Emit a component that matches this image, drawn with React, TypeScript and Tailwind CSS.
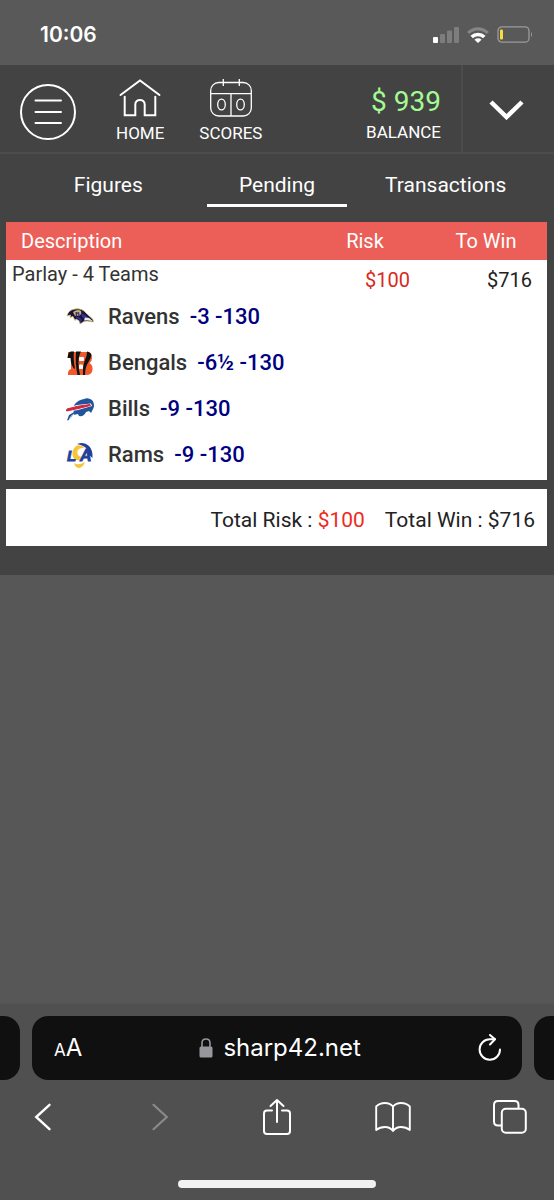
import type { ReactNode } from 'react'

const legs = [
  { team: 'Ravens', odds: '-3 -130', logo: <RavensLogo /> },
  { team: 'Bengals', odds: '-6½ -130', logo: <BengalsLogo /> },
  { team: 'Bills', odds: '-9 -130', logo: <BillsLogo /> },
  { team: 'Rams', odds: '-9 -130', logo: <RamsLogo /> },
]

const tabs = ['Figures', 'Pending', 'Transactions']

function RavensLogo() {
  return (
    <svg width="28" height="28" viewBox="0 0 28 28" aria-hidden="true">
      <path d="M1 13 Q2 7 9 6 Q16 5 20 10 L27 16.5 L27.5 19 L21 18 L18 18.5 L14 21 L13.5 18 L10 16 L9 17.5 L7 13.5 L4 14.5 L4.5 12 Z" fill="#17153f" stroke="#d9c36a" strokeWidth="0.8" />
      <path d="M7 9 Q12 5.500 15 8 Q16 11 13 13 L9 13 Z" fill="#c9b27a" />
      <path d="M8.500 13.500 L13 14 L16 17 L14 19.500 L12.500 16 Z" fill="#3b2c93" />
      <path d="M15 10 L19 12 L24 16 L19 16.500 L16 14 Z" fill="#35308d" />
      <path d="M19 14.500 L23 15 L27 18.300 L21 17.300 L18 17.500 Z" fill="#e9e9ee" />
      <text x="9" y="13" fontSize="7" className="font-['Liberation_Serif',serif] font-bold" fill="#231c55">B</text>
    </svg>
  )
}

function BengalsLogo() {
  return (
    <svg width="28" height="28" viewBox="0 0 28 28" aria-hidden="true">
      <path d="M2 3 H21 Q26 4 26 9 Q26 12.500 23.500 14 Q27 16 26.500 21 Q26 26 20 26 H2 Q1.500 21 5 20 V8 H2 Z" fill="#f0592b" />
      <path d="M1.500 9 Q2 3 5 2.500 L8 2.500 Q7 9 9 20 Q5 18 4.500 9 Z" fill="#111" />
      <path d="M10 2.500 L15 2.500 Q12.500 7 12.500 14 Q12.500 20 14 26 L11.500 26 Q9 15 10 2.500 Z" fill="#111" />
      <path d="M21 2.500 Q25 3 25.500 6 Q25 9 22.500 13 Q19 18 19 26 L17 26 Q16.500 17 19 11 Q21 7 21 2.500 Z" fill="#111" />
      <rect x="13" y="8" width="5" height="4" rx="1" fill="#fff" />
      <rect x="13" y="15.500" width="4" height="4.500" rx="1" fill="#fff" />
    </svg>
  )
}

function BillsLogo() {
  return (
    <svg width="28" height="28" viewBox="0 0 28 28" aria-hidden="true">
      <path d="M6 14 L9 9 Q12 5 18 4 Q22 2 26 5 Q29 8 27.500 13 L25 18 L23 16 L20 17 Q18 22 13 21 L12 19 L7 20 L3 25 L1 25.500 L3 20 L8 17 Z" fill="#22549b" />
      <path d="M0.500 13 L11 10 L25 8.500 L26 11 L12 15 L0 17 Z" fill="#fff" />
      <path d="M1 14 L12 11.200 L24 9.500 L24.500 10.500 L12 13.600 L0.500 16 Z" fill="#d3243c" stroke="#d3243c" strokeWidth="1" />
      <path d="M8 19 Q4 21 3 25.500" fill="none" stroke="#fff" strokeWidth="0.8" />
    </svg>
  )
}

function RamsLogo() {
  return (
    <svg width="28" height="28" viewBox="0 0 28 28" aria-hidden="true">
      <path d="M11 3 Q18 0 23 5 Q27 9 26.500 17 L23 14 Q22 7 17 5 Q14 3.500 11 3 Z" fill="#23409a" />
      <path d="M19 7 Q14 2.500 9.500 5.500 Q5 10 7 16 Q9 20 14 19 Q17 18 18 15 Q14 17 12 14 Q10 9 14 7.500 Q17 6.500 19 7 Z" fill="#f5c63b" />
      <path d="M8 22 Q12 25 19 21 Q17 27 12 27 Q9 26 8 22 Z" fill="#f5c63b" />
      <text x="1" y="20" fontSize="15" className="font-['Liberation_Sans',sans-serif] font-bold italic" fill="#23409a" stroke="#23409a" strokeWidth="0.8">L</text>
      <text x="14" y="20" fontSize="16" className="font-['Liberation_Sans',sans-serif] font-bold italic" fill="#23409a" stroke="#23409a" strokeWidth="0.8">A</text>
    </svg>
  )
}

function StatusBar() {
  return (
    <div className="flex h-[65px] items-center justify-between bg-[#595959] pl-10 pr-5 pt-1">
      <span className="font-['Inter',sans-serif] text-[21px] font-semibold">10:06</span>
      <div className="flex items-center gap-2">
        <svg width="26" height="16" viewBox="0 0 26 16" aria-label="Signal">
          <rect x="0" y="10" width="5" height="6" rx="1" fill="#fff" />
          <rect x="7" y="7" width="5" height="9" rx="1" fill="#7d7d7d" />
          <rect x="14" y="3.500" width="5" height="12.500" rx="1" fill="#7d7d7d" />
          <rect x="21" y="0" width="5" height="16" rx="1" fill="#7d7d7d" />
        </svg>
        <svg width="22" height="16" viewBox="0 0 22 16" fill="none" aria-label="Wi-Fi">
          <path d="M1.200 6 A13.500 13.500 0 0 1 20.800 6" stroke="#858585" strokeWidth="3.200" />
          <path d="M4.700 10 A9 9 0 0 1 17.300 10" stroke="#fff" strokeWidth="3.600" />
          <path d="M11 16 L7.500 12.700 A5 5 0 0 1 14.500 12.700 Z" fill="#fff" />
        </svg>
        <svg width="37" height="17" viewBox="0 0 37 17" fill="none" aria-label="Battery">
          <rect x="1" y="0.800" width="31" height="15.400" rx="4" stroke="#9b9b9b" strokeWidth="1.300" />
          <rect x="3" y="3.500" width="3" height="10" rx="1" fill="#f6dc3c" />
          <path d="M34 6 Q36 8.500 34 11 Z" fill="#9b9b9b" />
        </svg>
      </div>
    </div>
  )
}

function NavButton({ label, children }: { label: string; children: ReactNode }) {
  return (
    <button className="flex flex-col items-center gap-1 text-[17px] leading-6">
      {children}
      {label}
    </button>
  )
}

function Header() {
  return (
    <header className="flex h-[89px] items-stretch border-b-2 border-[#4c4c4c] bg-[#434343]">
      <div className="flex flex-1 items-center px-5 pt-[7px]">
        <button aria-label="Menu">
          <svg width="56" height="56" viewBox="0 0 56 56" fill="none" stroke="#fff" strokeWidth="2">
            <circle cx="28" cy="28" r="27" />
            <path d="M15.500 16.500 H41 M15.500 28 H41 M15.500 39 H41" strokeLinecap="round" />
          </svg>
        </button>
        <nav className="ml-10 flex gap-[35px]">
          <NavButton label="HOME">
            <svg width="42" height="38" viewBox="0 0 42 38" fill="none" stroke="#fff" strokeWidth="2" strokeLinecap="round">
              <path d="M1.500 16 L21 1.500 L40.500 16" />
              <path d="M5.700 17.700 V36.300 H16.300 V25.500 C16.300 19.500 25.700 19.500 25.700 25.500 V36.300 H36.300 V17.700" />
            </svg>
          </NavButton>
          <NavButton label="SCORES">
            <svg width="42" height="38" viewBox="0 0 42 38" fill="none" stroke="#fff" strokeWidth="1.300">
              <rect x="0.700" y="3.500" width="40.600" height="33.500" rx="8" />
              <path d="M0.700 14.700 H41.300 M21 14.700 V37 M13.300 0 V7 M29.300 0 V7" />
              <ellipse cx="11.500" cy="25.500" rx="3.800" ry="5.400" />
              <ellipse cx="30.500" cy="25.500" rx="3.800" ry="5.400" />
            </svg>
          </NavButton>
        </nav>
        <div className="ml-auto mt-2 text-right">
          <div className="text-[28px] leading-8 text-[#a4fb93]">$ 939</div>
          <div className="text-[17px] leading-7">BALANCE</div>
        </div>
      </div>
      <button aria-label="Account details" className="flex w-[93px] items-center justify-center border-l-2 border-[#4c4c4c] pr-1">
        <svg width="36" height="22" viewBox="0 0 36 22" fill="none" stroke="#fff" strokeWidth="4.500">
          <path d="M2 4 L17.500 19 L33 4" />
        </svg>
      </button>
    </header>
  )
}

function Tabs() {
  return (
    <nav className="grid grid-cols-3 px-6 pb-[15px] text-[21px]">
      {tabs.map(t => (
        <a
          key={t}
          href="#"
          className={t === 'Pending'
            ? 'mx-3.5 border-b-[3px] border-white pb-0.5 pt-3.5 text-center leading-[34px]'
            : 'mx-3.5 border-b-[3px] border-transparent pb-0.5 pt-3.5 text-center leading-[34px]'}
        >
          {t}
        </a>
      ))}
    </nav>
  )
}

function PendingTable() {
  return (
    <table className="w-full table-fixed bg-white text-xl leading-6 text-[#333]">
      <thead>
        <tr className="h-[38px] bg-[#eb5f58] text-white">
          <th className="pl-[15px] text-left font-normal">Description</th>
          <th className="w-[120px] font-normal">Risk</th>
          <th className="w-[122px] font-normal">To Win</th>
        </tr>
      </thead>
      <tbody>
        <tr className="align-top">
          <td className="py-0.5 pl-1.5">
            <div>Parlay - 4 Teams</div>
            <ul className="pl-[54px] pt-2">
              {legs.map(leg => (
                <li key={leg.team} className="flex h-[46px] items-center whitespace-nowrap text-[22px] font-medium">
                  {leg.logo}
                  <span className="ml-3.5">{leg.team}</span>
                  <span className="ml-2.5 text-[#000080]">{leg.odds}</span>
                </li>
              ))}
            </ul>
          </td>
          <td className="pr-[15px] pt-2 text-right text-[#da291c]">$100</td>
          <td className="pr-[15px] pt-2 text-right text-[#222]">$716</td>
        </tr>
      </tbody>
    </table>
  )
}

function BrowserBar() {
  return (
    <footer className="mt-auto border-t border-[#555] bg-[#505050] pt-3">
      <div className="flex h-16 gap-3">
        <div className="w-5 rounded-r-2xl bg-[#101010]" />
        <div className="flex flex-1 items-center justify-between rounded-2xl bg-[#101010] px-5 font-['Inter',sans-serif]">
          <button aria-label="Page settings" className="flex items-baseline pl-0.5">
            <span className="text-[17px]">A</span>
            <span className="text-2xl">A</span>
          </button>
          <button className="flex items-center gap-2.5 text-2xl">
            <svg width="14" height="20" viewBox="0 0 14 20" fill="none" aria-hidden="true">
              <path d="M3 9 V5 C3 -0.300 11 -0.300 11 5 V9" stroke="#97979c" strokeWidth="1.600" />
              <rect x="0.500" y="8.500" width="13" height="11" rx="1.500" fill="#97979c" />
            </svg>
            sharp42.net
          </button>
          <button aria-label="Reload">
            <svg width="24" height="28" viewBox="0 0 24 28" fill="none" stroke="#fff" strokeWidth="2" strokeLinecap="round" strokeLinejoin="round">
              <path d="M22 15.500 A10.200 10.200 0 1 1 11.800 5.300 L17 5.300" />
              <path d="M12 1 L17 5.300 L12 10.500" />
            </svg>
          </button>
        </div>
        <div className="w-5 rounded-l-2xl bg-[#101010]" />
      </div>
      <div className="flex items-center justify-between pl-[25px] pr-[26px] pt-[18px]">
        <button aria-label="Back" className="flex w-9 justify-center">
          <svg width="18" height="28" viewBox="0 0 18 28" fill="none" stroke="#fff" strokeWidth="2.400" strokeLinecap="round">
            <path d="M15.500 1.800 L2.200 14 L15.500 26.200" />
          </svg>
        </button>
        <button aria-label="Forward" className="flex w-9 justify-center">
          <svg width="18" height="28" viewBox="0 0 18 28" fill="none" stroke="#8a8a8a" strokeWidth="2.200" strokeLinecap="round">
            <path d="M2.500 1.800 L15.800 14 L2.500 26.200" />
          </svg>
        </button>
        <button aria-label="Share" className="flex w-9 justify-center">
          <svg width="30" height="38" viewBox="0 0 30 38" fill="none" stroke="#fff" strokeWidth="2" strokeLinecap="round" strokeLinejoin="round">
            <path d="M10 12.500 H5 Q2 12.500 2 15.500 V33 Q2 36 5 36 H25 Q28 36 28 33 V15.500 Q28 12.500 25 12.500 H20" />
            <path d="M15 24 V2 M8.500 8 L15 2 L21.500 8" />
          </svg>
        </button>
        <button aria-label="Bookmarks" className="flex w-9 justify-center">
          <svg width="36" height="32" viewBox="0 0 36 32" fill="none" stroke="#fff" strokeWidth="1.900" strokeLinejoin="round">
            <path d="M18 5.500 Q15 2 10 2 Q4.500 2 1.200 5.500 V29 Q5 26 10 26 Q15 26 18 30 Q21 26 26 26 Q31 26 34.800 29 V5.500 Q31.500 2 26 2 Q21 2 18 5.500 V29.500" />
          </svg>
        </button>
        <button aria-label="Tabs" className="flex w-9 justify-center">
          <svg width="34" height="34" viewBox="0 0 34 34" fill="none" stroke="#fff" strokeWidth="2">
            <rect x="8.800" y="8.800" width="24" height="24" rx="4" />
            <path d="M8.800 25.500 H5 Q1 25.500 1 21.500 V5 Q1 1 5 1 H21.500 Q25.500 1 25.500 5 V8.800" />
          </svg>
        </button>
      </div>
      <div className="mx-auto mb-3 mt-11 h-2 w-[198px] rounded-full bg-[#f1f1f1]" />
    </footer>
  )
}

export default function App() {
  return (
    <div className="flex min-h-screen flex-col bg-[#575757] font-['Roboto',sans-serif] text-white">
      <StatusBar />
      <Header />
      <main className="bg-[#434343] pb-[29px]">
        <Tabs />
        <div className="flex flex-col gap-[9px] pl-1.5 pr-[7px]">
          <PendingTable />
          <div className="flex h-[57px] items-center justify-end gap-5 bg-white px-3 pt-1.5 text-[21px] text-[#222]">
            <span>Total Risk : <span className="text-[#ee2a1f]">$100</span></span>
            <span>Total Win : $716</span>
          </div>
        </div>
      </main>
      <BrowserBar />
    </div>
  )
}
